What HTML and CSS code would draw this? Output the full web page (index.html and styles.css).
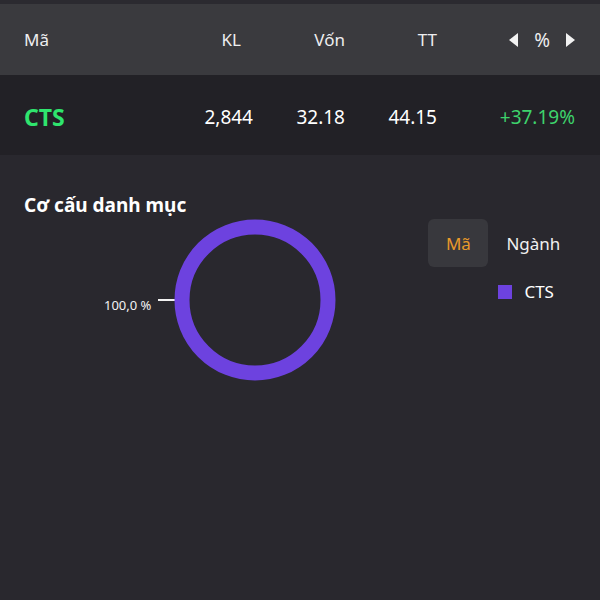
FILE: index.html
```html
<!DOCTYPE html>
<html lang="vi">
<head>
    <meta charset="UTF-8">
    <meta name="viewport" content="width=device-width, initial-scale=1.0">
    <title>Danh mục</title>
    <link rel="stylesheet" href="styles.css">
</head>
<body>
    <div class="app">
        <div class="table-head">
            <div class="col col-code">Mã</div>
            <div class="col col-kl">KL</div>
            <div class="col col-von">Vốn</div>
            <div class="col col-tt">TT</div>
            <div class="col col-pct">
                <span class="arrow arrow-left"></span>
                <span class="pct-sign">%</span>
                <span class="arrow arrow-right"></span>
            </div>
        </div>

        <div class="table-row">
            <div class="col col-code code">CTS</div>
            <div class="col col-kl">2,844</div>
            <div class="col col-von">32.18</div>
            <div class="col col-tt">44.15</div>
            <div class="col col-pct up">+37.19%</div>
        </div>

        <div class="structure">
            <h3 class="structure-title">Cơ cấu danh mục</h3>
            <div class="structure-body">
                <div class="chart">
                    <span class="chart-label">100,0 %</span>
                    <span class="chart-line"></span>
                    <svg class="donut" width="162" height="162" viewBox="0 0 162 162">
                        <circle cx="81" cy="81" r="73" fill="none" stroke="#6d42df" stroke-width="15"/>
                    </svg>
                </div>
                <div class="side">
                    <div class="tabs">
                        <button class="tab active">Mã</button>
                        <button class="tab">Ngành</button>
                    </div>
                    <div class="legend">
                        <span class="legend-box"></span>
                        <span>CTS</span>
                    </div>
                </div>
            </div>
        </div>
    </div>
</body>
</html>
```

FILE: styles.css
```css
body {
    margin: 0;
    padding: 0;
    background-color: #29282e;
    font-family: "Noto Sans", "Open Sans", sans-serif;
    color: #fff;
}

.app {
    width: 600px;
    height: 600px;
    border-top: 4px solid #2b2a30;
    box-sizing: border-box;
}

/* Bảng */
.table-head,
.table-row {
    display: grid;
    grid-template-columns: 24px 120px 109px 92px 92px 138px;
    align-items: center;
}

.table-head {
    height: 71px;
    background-color: #3a3a3e;
    font-size: 17px;
    color: #eeeef0;
}

.table-row {
    height: 80px;
    padding-top: 3px;
    box-sizing: border-box;
    background-color: #222126;
    font-size: 19px;
}

.col-code {
    grid-column: 2;
}

.col-kl, .col-von, .col-tt, .col-pct {
    text-align: right;
}

.table-head .col-kl {
    padding-right: 12px;
}

.table-head .col-pct {
    display: flex;
    justify-content: flex-end;
    align-items: center;
    gap: 16px;
}

.pct-sign {
    font-size: 19px;
}

.arrow {
    width: 0;
    height: 0;
    border-top: 7px solid transparent;
    border-bottom: 7px solid transparent;
}

.arrow-left {
    border-right: 9px solid #f2f2f2;
}

.arrow-right {
    border-left: 9px solid #f2f2f2;
}

.code {
    font-weight: bold;
    font-size: 23px;
    color: #2fe56e;
}

.up {
    color: #3ed36c;
}

/* Cơ cấu danh mục */
.structure {
    padding: 37px 24px 0 24px;
}

.structure-title {
    margin: 0;
    font-size: 19px;
    font-weight: bold;
    line-height: 26px;
}

.structure-body {
    display: flex;
    align-items: flex-start;
}

.chart {
    display: flex;
    align-items: center;
    margin-left: 80px;
    margin-top: 1px;
}

.chart-label {
    font-size: 13px;
    color: #f2f2f2;
    margin-top: 9px;
}

.chart-line {
    width: 20px;
    height: 2px;
    background-color: #f2f2f2;
    margin-left: 7px;
}

.donut {
    display: block;
    margin-left: -4px;
}

.side {
    margin-left: 92px;
    margin-top: 1px;
}

.tabs {
    display: flex;
    align-items: center;
    gap: 18px;
}

.tab {
    border: none;
    background: none;
    font-family: inherit;
    font-size: 17px;
    color: #f0f0f0;
    padding: 0;
    height: 48px;
}

.tab.active {
    background-color: #38383d;
    color: #e89a2a;
    width: 60px;
    border-radius: 6px;
}

.legend {
    display: flex;
    align-items: center;
    gap: 12px;
    margin-top: 13px;
    margin-left: 70px;
    font-size: 17px;
    line-height: 23px;
}

.legend-box {
    width: 14px;
    height: 14px;
    background-color: #6d42df;
}
```
